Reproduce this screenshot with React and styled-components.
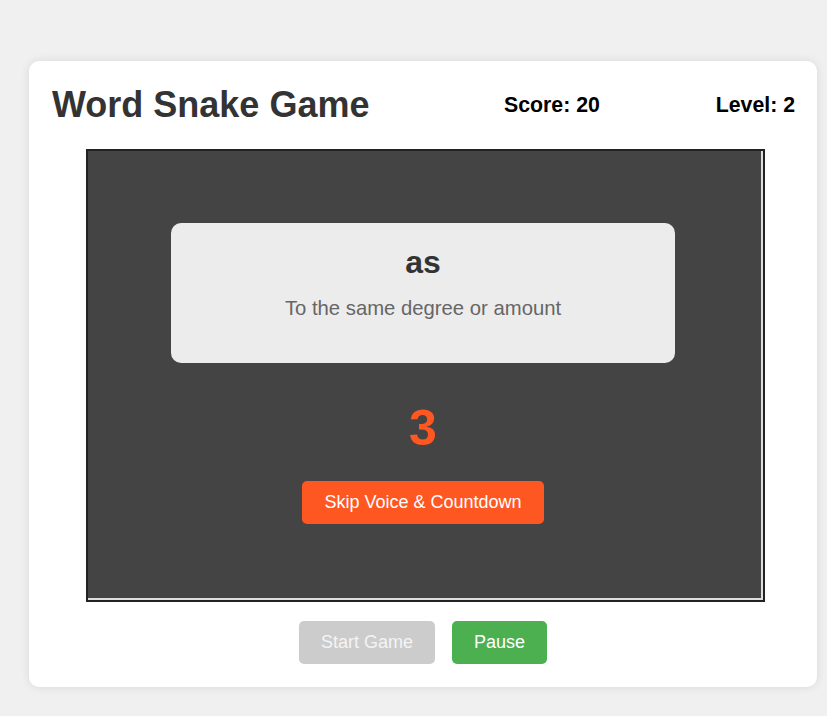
import React from 'react'
import styled, { createGlobalStyle } from 'styled-components'

const GlobalStyle = createGlobalStyle`
  body {
    margin: 0;
    background: #f0f0f0;
    font-family: "Liberation Sans", Arial, sans-serif;
  }
`

function App() {
  return (
    <Page>
      <GlobalStyle />
      <Card>
        <Header>
          <Title>Word Snake Game</Title>
          <Stats>
            <Stat>Score: 20</Stat>
            <Stat>Level: 2</Stat>
          </Stats>
        </Header>
        <BoardFrame>
          <Board>
            <WordCard>
              <Word>as</Word>
              <Definition>To the same degree or amount</Definition>
            </WordCard>
            <Countdown>3</Countdown>
            <SkipButton bg="#ff5722">Skip Voice &amp; Countdown</SkipButton>
          </Board>
        </BoardFrame>
        <Controls>
          <Button bg="#cccccc" fg="#f4f4f4" disabled>Start Game</Button>
          <Button bg="#4caf50">Pause</Button>
        </Controls>
      </Card>
    </Page>
  )
}

export default App

const Page = styled.div`
  padding: 61px 10px 29px 29px;
`

const Card = styled.div`
  width: 788px;
  box-sizing: border-box;
  background: #fff;
  border-radius: 10px;
  box-shadow: 0 0 10px rgba(0, 0, 0, 0.1);
  padding: 23px 22px 23px 23px;
`

const Header = styled.div`
  display: flex;
  align-items: center;
  justify-content: space-between;
  margin-bottom: 23px;
`

const Title = styled.h1`
  margin: 0;
  font-size: 36px;
  font-weight: bold;
  color: #333;
`

const Stats = styled.div`
  display: flex;
  justify-content: space-between;
  width: 291px;
`

const Stat = styled.div`
  font-size: 21.3px;
  font-weight: bold;
  color: #000;
`

const BoardFrame = styled.div`
  width: 673px;
  margin: 0 0 0 34px;
  border: 2px solid #222;
  background: #ddd;
  padding: 0 2px 2px 0;
`

const Board = styled.div`
  height: 447px;
  background: #444;
  display: flex;
  flex-direction: column;
  align-items: center;
  padding-top: 72px;
  box-sizing: border-box;
`

const WordCard = styled.div`
  width: 504px;
  height: 140px;
  margin-right: 3px;
  box-sizing: border-box;
  padding-top: 21px;
  background: rgba(255, 255, 255, 0.9);
  border-radius: 10px;
  text-align: center;
`

const Word = styled.h2`
  margin: 0 0 16px;
  font-size: 32px;
  font-weight: bold;
  color: #333;
`

const Definition = styled.p`
  margin: 0;
  font-size: 20.3px;
  color: #666;
`

const Countdown = styled.div`
  margin: 36px 3px 24px 0;
  font-size: 50px;
  font-weight: bold;
  color: #ff5722;
`

const Button = styled.button`
  font-family: "Liberation Sans", Arial, sans-serif;
  font-size: 18px;
  padding: 11px 22px;
  border: none;
  border-radius: 5px;
  background: ${p => p.bg};
  color: ${p => p.fg || '#fff'};
  cursor: pointer;
  &:disabled {
    cursor: default;
  }
`

const SkipButton = styled(Button)`
  margin-right: 3px;
`

const Controls = styled.div`
  display: flex;
  justify-content: center;
  gap: 17px;
  margin-top: 19px;
  padding-right: 1px;
`
